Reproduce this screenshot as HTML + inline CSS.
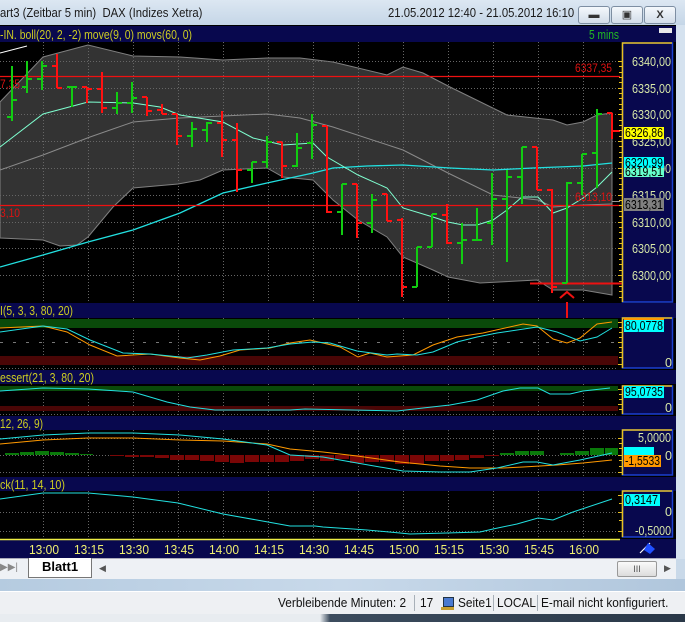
<!DOCTYPE html>
<html><head><meta charset="utf-8">
<style>
html,body{margin:0;padding:0;}
body{width:685px;height:622px;overflow:hidden;position:relative;background:#c9d9e9;font-family:"Liberation Sans",sans-serif;}
.abs{position:absolute;}
#title{left:0;top:0;width:685px;height:25px;background:linear-gradient(#dce7f2,#c5d6e7);}
#title .t{left:0;top:5px;font-size:13px;color:#1a1a1a;white-space:nowrap;transform:scaleX(0.87);transform-origin:0 0;}
.btn{top:6px;height:16px;border:1px solid #7d8ea2;border-radius:3px;background:linear-gradient(#f4f8fc,#d3dde9);font-size:11px;text-align:center;line-height:16px;color:#333;}
#tabs{left:0;top:558px;width:676px;height:20px;background:#eef1f5;border-top:1px solid #aab;}
#deco{left:0;top:579px;width:685px;height:12px;background:linear-gradient(90deg,#b5cbe0,#c8d9ea,#b0c6dc);}
#status{left:0;top:591px;width:685px;height:22px;background:#eef0f3;border-top:1px solid #fff;border-bottom:1px solid #a0a8b0;font-size:12.5px;color:#111;}
#status span{position:absolute;top:4px;white-space:nowrap;transform:scaleX(0.95);transform-origin:0 0;}
#bottom{left:0;top:614px;width:685px;height:8px;background:linear-gradient(90deg,#e8ecf0 0,#e8ecf0 320px,#3c4c5e 330px,#2a3848);}
.sep{position:absolute;top:3px;width:1px;height:16px;background:#a8b0b8;}
</style></head><body>

<div id="title" class="abs">
 <div class="abs t">art3 (Zeitbar 5 min)&nbsp; DAX (Indizes Xetra)</div>
 <div class="abs t" style="left:388px;">21.05.2012 12:40 - 21.05.2012 16:10</div>
 <div class="abs btn" style="left:578px;width:30px;">&#9644;</div>
 <div class="abs btn" style="left:611px;width:30px;">&#9635;</div>
 <div class="abs btn" style="left:644px;width:30px;font-weight:bold;">X</div>
</div>

<svg class="abs" style="left:0;top:25px;" width="685" height="534" viewBox="0 25 685 534" xmlns="http://www.w3.org/2000/svg" font-family="Liberation Sans, sans-serif">
 <rect x="0" y="25" width="685" height="534" fill="#000"/>
 <rect x="676" y="25" width="9" height="534" fill="#d5e2ef"/>
 <rect x="0" y="26" width="676" height="16" fill="#08084e"/>
 <text x="0" y="39" font-size="12.5" fill="#cccc22" textLength="192" lengthAdjust="spacingAndGlyphs">-IN. boll(20, 2, -2) move(9, 0) movs(60, 0)</text>
 <text x="589" y="39" font-size="12.5" fill="#22bb22" textLength="30" lengthAdjust="spacingAndGlyphs">5 mins</text>
 <rect x="659" y="28" width="13" height="5" fill="#e8e8e8"/>

 <rect x="0" y="303" width="676" height="15" fill="#08084e"/>
 <text x="0" y="315" font-size="12.5" fill="#cccc22" textLength="73" lengthAdjust="spacingAndGlyphs">I(5, 3, 3, 80, 20)</text>
 <rect x="0" y="370" width="676" height="14" fill="#08084e"/>
 <text x="0" y="382" font-size="12.5" fill="#cccc22" textLength="94" lengthAdjust="spacingAndGlyphs">essert(21, 3, 80, 20)</text>
 <rect x="0" y="416" width="676" height="14" fill="#08084e"/>
 <text x="0" y="428" font-size="12.5" fill="#cccc22" textLength="43" lengthAdjust="spacingAndGlyphs">12, 26, 9)</text>
 <rect x="0" y="477" width="676" height="14" fill="#08084e"/>
 <text x="0" y="489" font-size="12.5" fill="#cccc22" textLength="65" lengthAdjust="spacingAndGlyphs">ck(11, 14, 10)</text>

 <polygon fill="#333333" stroke="#808080" stroke-width="1" points="0,102 43,57 88,45 133,56 180,57 223,60 267,58 300,58 333,62 387,75 403,67 423,73 450,87 507,115 553,120 567,125 583,122 597,115 612,113 612,295 583,290 553,290 537,280 480,283 448,277 433,270 403,257 387,237 358,220 333,200 313,180 283,177 267,168 223,170 200,180 178,184 133,188 113,207 88,237 77,245 60,246 43,240 0,238"/>

 <g stroke="#666" stroke-width="1" stroke-dasharray="1 2">
  <path d="M0 61.5H618M0 88.5H618M0 114.5H618M0 141.5H618M0 168.5H618M0 195.5H618M0 222.5H618M0 248.5H618M0 275.5H618"/>
  <path d="M43.5 42V302M88.5 42V302M133.5 42V302M178.5 42V302M223.5 42V302M268.5 42V302M313.5 42V302M358.5 42V302M403.5 42V302M448.5 42V302M493.5 42V302M538.5 42V302M583.5 42V302"/>
  <path d="M43.5 318V370M88.5 318V370M133.5 318V370M178.5 318V370M223.5 318V370M268.5 318V370M313.5 318V370M358.5 318V370M403.5 318V370M448.5 318V370M493.5 318V370M538.5 318V370M583.5 318V370"/>
  <path d="M43.5 384V416M88.5 384V416M133.5 384V416M178.5 384V416M223.5 384V416M268.5 384V416M313.5 384V416M358.5 384V416M403.5 384V416M448.5 384V416M493.5 384V416M538.5 384V416M583.5 384V416"/>
  <path d="M43.5 430V477M88.5 430V477M133.5 430V477M178.5 430V477M223.5 430V477M268.5 430V477M313.5 430V477M358.5 430V477M403.5 430V477M448.5 430V477M493.5 430V477M538.5 430V477M583.5 430V477"/>
  <path d="M43.5 491V538M88.5 491V538M133.5 491V538M178.5 491V538M223.5 491V538M268.5 491V538M313.5 491V538M358.5 491V538M403.5 491V538M448.5 491V538M493.5 491V538M538.5 491V538M583.5 491V538"/>
  <path d="M0 438.5H618M0 455.5H618M0 472.5H618M0 512.5H618M0 531.5H618M0 368.5H618M0 414.5H618"/>
 </g>

 <polyline fill="none" stroke="#8a8a8a" stroke-width="1" points="0,170 43,155 90,137 133,122 180,118 267,114 300,118 333,127 403,150 448,173 493,195 538,200 553,207 583,205 612,204"/>
 <polyline fill="none" stroke="#22e0e0" stroke-width="1.3" points="0,267 43,255 88,242 133,230 180,213 223,193 267,183 313,173 333,168 367,166 403,165 450,168 493,170 533,168 583,166 612,163"/>
 <polyline fill="none" stroke="#7fffd0" stroke-width="1" points="0,147 43,114 88,102 133,103 160,107 180,115 223,122 253,138 283,145 313,143 327,157 358,175 387,188 403,208 433,217 448,222 463,225 477,225 493,220 507,210 522,197 538,197 553,213 567,208 583,198 597,187 612,172"/>
 <polyline fill="none" stroke="#ffffff" stroke-width="1" points="0,53 27,46"/>
 <path d="M0 76.5H620M0 205.5H620" stroke="#ee1111" stroke-width="1.2"/>
 <text x="575" y="72" font-size="12" fill="#dd1111" textLength="37" lengthAdjust="spacingAndGlyphs">6337,35</text>
 <text x="0" y="88" font-size="12" fill="#dd1111" textLength="20" lengthAdjust="spacingAndGlyphs">7,35</text>
 <text x="575" y="201" font-size="12" fill="#dd1111" textLength="37" lengthAdjust="spacingAndGlyphs">6313,10</text>
 <text x="0" y="217" font-size="12" fill="#dd1111" textLength="20" lengthAdjust="spacingAndGlyphs">3,10</text>
 <path d="M530 283.5H654" stroke="#ee1111" stroke-width="2"/>
 <path d="M567 302V318M560 298L567 292L574 298" stroke="#ee1111" stroke-width="2" fill="none"/>
 <path d="M612 201.5H620" stroke="#999" stroke-width="1"/>

 <g stroke="#11cc11" stroke-width="2" fill="none">
  <path d="M12 66V121M7 117H12M12 100H17"/>
  <path d="M27 61V93M22 87H27M27 79H32"/>
  <path d="M42 61V90M37 79H42M42 66H47"/>
  <path d="M72 86V107M67 87H72M72 87H77"/>
  <path d="M117 92V114M112 108H117M117 103H122"/>
  <path d="M132 82V113M127 103H132M132 98H137"/>
  <path d="M192 122V147M187 136H192M192 129H197"/>
  <path d="M207 122V142M202 130H207M207 123H212"/>
  <path d="M252 162V183M247 170H252M252 162H257"/>
  <path d="M267 136V168M262 162H267M267 142H272"/>
  <path d="M297 133V167M292 166H297M297 148H302"/>
  <path d="M312 114V159M307 143H312M312 125H317"/>
  <path d="M342 184V235M337 212H342M342 184H347"/>
  <path d="M372 194V233M367 223H372M372 200H377"/>
  <path d="M417 247V287M412 287H417M417 247H422"/>
  <path d="M432 214V247M427 247H432M432 214H437"/>
  <path d="M462 223V264M457 243H462M462 240H467"/>
  <path d="M477 208V241M472 240H477M477 240H482"/>
  <path d="M492 173V245M487 223H492M492 199H497"/>
  <path d="M507 170V262M502 199H507M507 177H512"/>
  <path d="M522 147V204M517 177H522M522 147H527"/>
  <path d="M567 182V283M562 283H567M567 183H572"/>
  <path d="M582 154V195M577 183H582M582 154H587"/>
  <path d="M597 109V188M592 153H597M597 114H602"/>
 </g>
 <g stroke="#ff1111" stroke-width="2" fill="none">
  <path d="M57 54V88M52 66H57M57 88H62"/>
  <path d="M87 87V103M82 87H87M87 89H92"/>
  <path d="M102 72V113M97 89H102M102 108H107"/>
  <path d="M147 97V116M142 97H147M147 111H152"/>
  <path d="M162 104V114M157 110H162M162 114H167"/>
  <path d="M177 114V145M172 114H177M177 136H182"/>
  <path d="M222 111V157M217 123H222M222 140H227"/>
  <path d="M237 123V192M232 140H237M237 170H242"/>
  <path d="M282 142V178M277 142H282M282 166H287"/>
  <path d="M327 126V213M322 126H327M327 212H332"/>
  <path d="M357 184V238M352 184H357M357 223H362"/>
  <path d="M387 194V221M382 194H387M387 221H392"/>
  <path d="M402 218V297M397 220H402M402 287H407"/>
  <path d="M447 204V244M442 215H447M447 243H452"/>
  <path d="M537 147V190M532 147H537M537 190H542"/>
  <path d="M552 189V293M547 190H552M552 287H557"/>
  <path d="M612 113V139M607 113H612M612 131H620"/>
 </g>

 <rect x="0" y="319" width="618" height="9" fill="#0a4a0a"/>
 <rect x="0" y="356" width="618" height="9" fill="#4a0606"/>
 <path d="M0 342.5H618" stroke="#777" stroke-dasharray="3 10"/>
 <polyline fill="none" stroke="#ff9900" stroke-width="1" points="0,328 43,326 67,332 90,345 117,356 150,354 180,358 200,360 220,356 240,350 270,348 290,343 310,340 340,347 358,357 370,353 387,357 413,355 433,345 457,337 483,333 523,324 537,326 553,339 567,343 580,338 597,324 612,322"/>
 <polyline fill="none" stroke="#22e0e0" stroke-width="1" points="0,332 43,326 67,329 90,340 123,353 150,354 180,357 187,358 207,355 233,350 267,348 290,344 313,342 330,343 357,351 387,355 397,354 417,355 433,352 457,342 477,337 497,333 537,327 557,332 580,341 597,337 612,328"/>

 <rect x="0" y="386" width="618" height="5" fill="#0a4a0a"/>
 <rect x="0" y="406" width="618" height="5" fill="#4a0606"/>
 <polyline fill="none" stroke="#22e0e0" stroke-width="1" points="0,391 43,388 88,389 133,392 150,397 167,402 190,407 215,410 250,410 290,410 305,409 397,411 423,408 450,405 477,400 503,391 520,388 538,388 550,394 570,394 583,391 610,388"/>

 <g fill="#0a7a0a">
  <rect x="5" y="453" width="14" height="2"/><rect x="20" y="452" width="14" height="3"/><rect x="35" y="451" width="14" height="4"/><rect x="50" y="452" width="14" height="3"/><rect x="65" y="453" width="14" height="2"/><rect x="80" y="454" width="13" height="1"/>
  <rect x="500" y="453" width="14" height="2"/><rect x="515" y="451" width="14" height="4"/><rect x="530" y="451" width="14" height="4"/><rect x="560" y="453" width="14" height="2"/><rect x="575" y="451" width="14" height="4"/><rect x="590" y="448" width="14" height="7"/><rect x="605" y="448" width="13" height="7"/>
 </g>
 <g fill="#7a0606">
  <rect x="110" y="455" width="14" height="1"/><rect x="125" y="455" width="14" height="2"/><rect x="140" y="455" width="14" height="2"/><rect x="155" y="455" width="14" height="3"/><rect x="170" y="455" width="14" height="5"/><rect x="185" y="455" width="14" height="5"/><rect x="200" y="455" width="14" height="6"/><rect x="215" y="455" width="14" height="7"/><rect x="230" y="455" width="14" height="8"/><rect x="245" y="455" width="14" height="7"/><rect x="260" y="455" width="14" height="7"/><rect x="275" y="455" width="14" height="7"/>
  <rect x="290" y="455" width="14" height="6"/><rect x="305" y="455" width="14" height="4"/><rect x="320" y="455" width="14" height="6"/><rect x="335" y="455" width="14" height="4"/><rect x="350" y="455" width="14" height="8"/><rect x="365" y="455" width="14" height="7"/><rect x="380" y="455" width="14" height="7"/><rect x="395" y="455" width="14" height="9"/><rect x="410" y="455" width="14" height="9"/><rect x="425" y="455" width="14" height="6"/><rect x="440" y="455" width="14" height="6"/><rect x="455" y="455" width="14" height="5"/><rect x="470" y="455" width="14" height="3"/><rect x="485" y="455" width="14" height="1"/>
 </g>
 <polyline fill="none" stroke="#ff9900" stroke-width="1" points="0,444 43,440 88,438 133,438 180,440 223,441 267,444 290,449 323,452 357,456 400,462 440,466 470,468 503,468 523,467 557,465 583,463 612,460"/>
 <polyline fill="none" stroke="#22e0e0" stroke-width="1" points="0,439 43,435 88,433 133,433 180,435 223,439 267,445 290,455 323,457 357,463 403,471 440,472 470,472 497,468 523,462 537,462 553,465 580,460 612,453"/>

 <polyline fill="none" stroke="#22e0e0" stroke-width="1" points="0,499 43,493 88,493 133,497 178,503 223,514 268,522 290,526 315,526 323,527 353,529 367,530 400,533 410,534 447,533 480,532 493,529 517,524 538,518 553,520 573,512 612,499"/>

 <g fill="#08084e" stroke-width="1.5">
  <rect x="622.5" y="43" width="50" height="259" stroke="#1a3fd0"/>
  <rect x="622.5" y="318" width="50" height="50" stroke="#1a3fd0"/>
  <rect x="622.5" y="386" width="50" height="28" stroke="#1a3fd0"/>
  <rect x="622.5" y="430" width="50" height="45" stroke="#1a3fd0"/>
  <rect x="622.5" y="491" width="50" height="46" stroke="#1a3fd0"/>
 </g>
 <g stroke="#e8c020" stroke-width="1.5" fill="none">
  <path d="M622.5 302V43H672M622.5 368V318H672M622.5 414V386H672M622.5 475V430H672M622.5 537V491H672"/>
 </g>
 <g stroke="#e8c020" stroke-width="1">
  <path d="M618 61.5h4M619 66.5h3M619 72.5h3M619 77.5h3M619 82.5h3M618 88.5h4M619 93.5h3M619 98.5h3M619 104.5h3M619 109.5h3M618 114.5h4M619 120.5h3M619 125.5h3M619 130.5h3M619 136.5h3M618 141.5h4M619 146.5h3M619 152.5h3M619 157.5h3M619 162.5h3M618 168.5h4M619 173.5h3M619 178.5h3M619 184.5h3M619 189.5h3M618 195.5h4M619 200.5h3M619 205.5h3M619 211.5h3M619 216.5h3M618 222.5h4M619 227.5h3M619 232.5h3M619 238.5h3M619 243.5h3M618 248.5h4M619 254.5h3M619 259.5h3M619 264.5h3M619 270.5h3M618 275.5h4M619 281.5h3M619 286.5h3M619 291.5h3M619 297.5h3"/>
  <path d="M618 322.5h4M619 327.5h3M619 332.5h3M619 337.5h3M618 342.5h4M619 347.5h3M619 352.5h3M619 357.5h3M618 364.5h4"/>
  <path d="M618 389.5h4M619 394.5h3M619 399.5h3M618 404.5h4M619 409.5h3"/>
  <path d="M618 438.5h4M619 443.5h3M619 448.5h3M618 455.5h4M619 460.5h3M619 466.5h3M618 472.5h4"/>
  <path d="M618 495.5h4M619 503.5h3M618 512.5h4M619 520.5h3M618 531.5h4"/>
 </g>
 <g font-size="12.5" fill="#d8e8a8">
  <text x="632" y="66" textLength="39" lengthAdjust="spacingAndGlyphs">6340,00</text>
  <text x="632" y="93" textLength="39" lengthAdjust="spacingAndGlyphs">6335,00</text>
  <text x="632" y="119" textLength="39" lengthAdjust="spacingAndGlyphs">6330,00</text>
  <text x="632" y="146" textLength="39" lengthAdjust="spacingAndGlyphs">6325,00</text>
  <text x="632" y="173" textLength="39" lengthAdjust="spacingAndGlyphs">6320,00</text>
  <text x="632" y="200" textLength="39" lengthAdjust="spacingAndGlyphs">6315,00</text>
  <text x="632" y="227" textLength="39" lengthAdjust="spacingAndGlyphs">6310,00</text>
  <text x="632" y="253" textLength="39" lengthAdjust="spacingAndGlyphs">6305,00</text>
  <text x="632" y="280" textLength="39" lengthAdjust="spacingAndGlyphs">6300,00</text>
  <text x="665" y="367">0</text><text x="665" y="412">0</text>
  <text x="638" y="442" textLength="33" lengthAdjust="spacingAndGlyphs">5,0000</text><text x="665" y="460">0</text>
  <text x="665" y="516">0</text><text x="635" y="535" textLength="36" lengthAdjust="spacingAndGlyphs">-0,5000</text>
 </g>
 <g font-size="12.5" fill="#000">
 <rect x="624" y="127" width="40" height="12" fill="#ffff00"/><text x="625" y="137" textLength="38" lengthAdjust="spacingAndGlyphs">6326,86</text>
 <rect x="624" y="157" width="40" height="11" fill="#00ffff"/><text x="625" y="167" textLength="38" lengthAdjust="spacingAndGlyphs">6320,99</text>
 <rect x="624" y="168" width="40" height="9" fill="#66ffcc"/><text x="625" y="176" textLength="38" lengthAdjust="spacingAndGlyphs">6319,51</text>
 <rect x="624" y="198" width="40" height="13" fill="#808080"/><text x="625" y="209" textLength="38" lengthAdjust="spacingAndGlyphs">6313,31</text>
 <rect x="624" y="318" width="40" height="5" fill="#ff9900"/>
 <rect x="624" y="320" width="40" height="12" fill="#00ffff"/><text x="625" y="330" textLength="38" lengthAdjust="spacingAndGlyphs">80,0778</text>
 <rect x="624" y="386" width="40" height="12" fill="#00ffff"/><text x="625" y="396" textLength="38" lengthAdjust="spacingAndGlyphs">95,0735</text>
 <rect x="624" y="447" width="30" height="8" fill="#00ffff"/>
 <rect x="624" y="455" width="37" height="12" fill="#ff9900"/><text x="625" y="465" textLength="35" lengthAdjust="spacingAndGlyphs">-1,5533</text>
 <rect x="624" y="494" width="36" height="12" fill="#00ffff"/><text x="625" y="504" textLength="33" lengthAdjust="spacingAndGlyphs">0,3147</text>
 </g>

 <rect x="0" y="539" width="676" height="19" fill="#08084e"/>
 <path d="M0 539.5H620" stroke="#eeee44" stroke-width="1.5"/>
 <g font-size="13" fill="#f0f070">
  <text x="29" y="554" textLength="30" lengthAdjust="spacingAndGlyphs">13:00</text>
  <text x="74" y="554" textLength="30" lengthAdjust="spacingAndGlyphs">13:15</text>
  <text x="119" y="554" textLength="30" lengthAdjust="spacingAndGlyphs">13:30</text>
  <text x="164" y="554" textLength="30" lengthAdjust="spacingAndGlyphs">13:45</text>
  <text x="209" y="554" textLength="30" lengthAdjust="spacingAndGlyphs">14:00</text>
  <text x="254" y="554" textLength="30" lengthAdjust="spacingAndGlyphs">14:15</text>
  <text x="299" y="554" textLength="30" lengthAdjust="spacingAndGlyphs">14:30</text>
  <text x="344" y="554" textLength="30" lengthAdjust="spacingAndGlyphs">14:45</text>
  <text x="389" y="554" textLength="30" lengthAdjust="spacingAndGlyphs">15:00</text>
  <text x="434" y="554" textLength="30" lengthAdjust="spacingAndGlyphs">15:15</text>
  <text x="479" y="554" textLength="30" lengthAdjust="spacingAndGlyphs">15:30</text>
  <text x="524" y="554" textLength="30" lengthAdjust="spacingAndGlyphs">15:45</text>
  <text x="569" y="554" textLength="30" lengthAdjust="spacingAndGlyphs">16:00</text>
 </g>
 <path d="M640 553L650 543" stroke="#fff" stroke-width="1.2"/>
 <path d="M648 543L655 549L650 554L644 550Z" fill="#2050ff"/>
</svg>

<div id="tabs" class="abs">
 <div class="abs" style="left:0;top:3px;font-size:10px;color:#888;">&#9654;&#9654;|</div>
 <div class="abs" style="left:28px;top:-1px;width:62px;height:19px;background:#fff;border:1px solid #777;border-top:none;font-weight:bold;font-size:13px;text-align:center;line-height:18px;">Blatt1</div>
 <div class="abs" style="left:99px;top:4px;font-size:9px;color:#555;">&#9664;</div>
 <div class="abs" style="left:617px;top:2px;width:38px;height:14px;border:1px solid #999;border-radius:2px;background:linear-gradient(#fafafa,#dcdcdc);font-size:9px;text-align:center;line-height:14px;color:#555;">III</div>
 <div class="abs" style="left:664px;top:4px;font-size:9px;color:#555;">&#9654;</div>
</div>
<div id="deco" class="abs"></div>
<div id="status" class="abs">
 <span style="left:278px;">Verbleibende Minuten: 2</span>
 <div class="sep" style="left:414px;"></div>
 <span style="left:420px;">17</span>
 <div class="abs" style="left:443px;top:5px;width:9px;height:8px;background:#4a7ad0;border:1px solid #234;"></div>
 <div class="abs" style="left:441px;top:15px;width:13px;height:3px;background:#c8a030;"></div>
 <span style="left:458px;">Seite1</span>
 <div class="sep" style="left:493px;"></div>
 <span style="left:497px;">LOCAL</span>
 <div class="sep" style="left:537px;"></div>
 <span style="left:541px;">E-mail nicht konfiguriert.</span>
</div>
<div id="bottom" class="abs"></div>
</body></html>
